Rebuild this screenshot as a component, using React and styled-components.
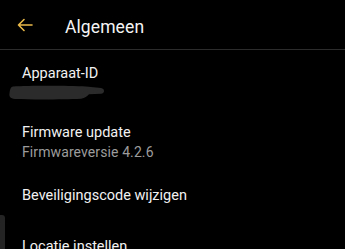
import React from "react";
import styled, { createGlobalStyle } from "styled-components";

const Global = createGlobalStyle`
  html, body { margin: 0; padding: 0; background: #000; }
  body { font-family: Roboto, "Noto Sans", sans-serif; -webkit-font-smoothing: antialiased; }
`;

const Screen = styled.div`
  position: relative;
  width: 345px;
  height: 249px;
  overflow: hidden;
  background: #000;
  color: #f2f2f2;
`;

const Header = styled.header`
  display: flex;
  align-items: center;
  height: 50px;
  border-bottom: 1px solid #2c2c2c;
  box-sizing: border-box;
  padding-left: 17px;
`;

const BackButton = styled.button`
  display: flex;
  align-items: center;
  justify-content: center;
  width: 16px;
  height: 16px;
  padding: 0;
  margin-top: 1px;
  border: none;
  background: none;
  color: #e9b949;
`;

const Title = styled.h1`
  margin: 4px 0 0 32px;
  font-size: 17.5px;
  line-height: 22px;
  font-weight: 400;
  color: #f4f4f4;
  letter-spacing: 0.1px;
`;

const List = styled.div`
  display: flex;
  flex-direction: column;
  padding-left: 22px;
`;

const Item = styled.div`
  display: flex;
  flex-direction: column;
  padding-top: ${(p) => p.$top}px;
`;

const Label = styled.div`
  font-size: 14.5px;
  line-height: 18px;
  color: #f2f2f2;
`;

const Sub = styled.div`
  font-size: 14px;
  line-height: 16px;
  margin-top: 2px;
  color: #9c9c9c;
  letter-spacing: 0.1px;
`;

const Redaction = styled.svg`
  display: block;
  margin-left: -13px;
  margin-top: 2px;
`;

const EdgeTab = styled.div`
  position: absolute;
  left: 0;
  top: 215px;
  width: 5px;
  height: 40px;
  background: #242424;
  border-radius: 0 3px 0 0;
`;

export default function App() {
  return (
    <>
      <Global />
      <Screen>
        <Header>
          <BackButton aria-label="Terug">
            <svg width="16" height="14" viewBox="0 0 16 14" fill="none" stroke="currentColor" strokeWidth="1.6" strokeLinecap="round" strokeLinejoin="round">
              <path d="M15 7H1.5M7 1.5L1.5 7L7 12.5" />
            </svg>
          </BackButton>
          <Title>Algemeen</Title>
        </Header>
        <List>
          <Item $top={15}>
            <Label>Apparaat-ID</Label>
            <Redaction width="96" height="15" viewBox="0 0 96 15">
              <path
                d="M4 1.5 C20 0.5 58 0.5 77 1.5 L92 3 C96 3.5 96 8.5 92 8.8 L80 9.2 C78 11.5 76 13 72 13.8 C54 14.5 25 14.8 6 14 C1 13.5 0 11.5 0.5 8 C1 4 2 1.8 4 1.5 Z"
                fill="#2b2b2b"
              />
            </Redaction>
          </Item>
          <Item $top={24}>
            <Label>Firmware update</Label>
            <Sub>Firmwareversie 4.2.6</Sub>
          </Item>
          <Item $top={27}>
            <Label>Beveiligingscode wijzigen</Label>
          </Item>
          <Item $top={33}>
            <Label>Locatie instellen</Label>
          </Item>
        </List>
        <EdgeTab />
      </Screen>
    </>
  );
}
